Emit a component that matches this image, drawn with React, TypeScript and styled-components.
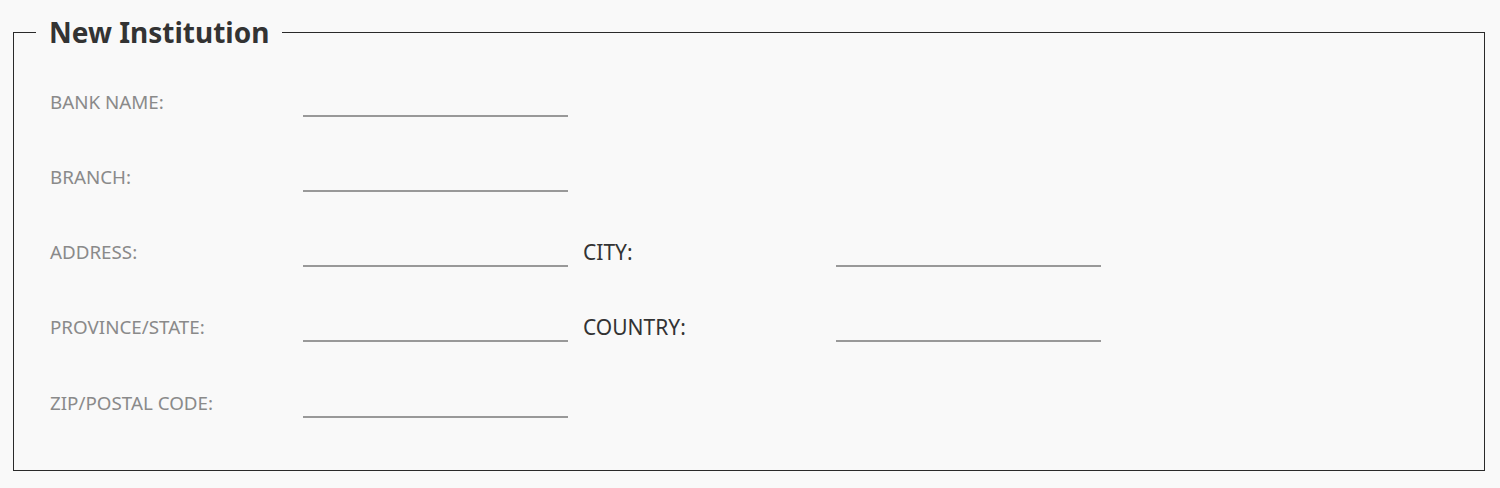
import React from "react";
import styled, { createGlobalStyle } from "styled-components";

const Global = createGlobalStyle`
  html, body { margin: 0; padding: 0; background: #f9f9f9; }
  body { font-family: "Noto Sans", "Open Sans", sans-serif; }
`;

const Page = styled.div`
  padding: 13px 15px 17px 13px;
  box-sizing: border-box;
`;

const Fieldset = styled.fieldset`
  margin: 0;
  border: 1px solid #2a2a2a;
  padding: 0 0 29px 22px;
  min-width: 0;
`;

const Legend = styled.legend`
  padding: 0 13px;
  font-size: 28px;
  font-weight: 700;
  color: #333;
  line-height: 38px;
`;

const Grid = styled.div`
  display: grid;
  grid-template-columns: 253px 265px 15px 253px 265px;
  grid-auto-rows: 75.25px;
  padding: 14px 0 0 14px;
  align-items: center;
`;

const Label = styled.label<{ $dark?: boolean }>`
  font-size: ${(p) => (p.$dark ? "21px" : "18.8px")};
  color: ${(p) => (p.$dark ? "#333" : "#8a8a8a")};
  grid-column: ${(p) => (p.$dark ? 4 : 1)};
  margin-bottom: 2px;
`;

const Input = styled.input<{ $col: number }>`
  grid-column: ${(p) => p.$col};
  height: 28px;
  border: none;
  border-bottom: 2px solid #999;
  background: transparent;
  padding: 0;
  font: inherit;
  font-size: 17px;
  outline: none;
  box-sizing: border-box;
`;

const Row = styled.div`
  display: contents;
`;

const rows: { left: string; right?: string }[] = [
  { left: "BANK NAME:" },
  { left: "BRANCH:" },
  { left: "ADDRESS:", right: "CITY:" },
  { left: "PROVINCE/STATE:", right: "COUNTRY:" },
  { left: "ZIP/POSTAL CODE:" },
];

export default function App() {
  return (
    <>
      <Global />
      <Page>
        <Fieldset>
          <Legend>New Institution</Legend>
          <Grid>
            {rows.map((r) => (
              <Row key={r.left}>
                <Label>{r.left}</Label>
                <Input $col={2} />
                {r.right && (
                  <>
                    <Label $dark>{r.right}</Label>
                    <Input $col={5} />
                  </>
                )}
              </Row>
            ))}
          </Grid>
        </Fieldset>
      </Page>
    </>
  );
}
